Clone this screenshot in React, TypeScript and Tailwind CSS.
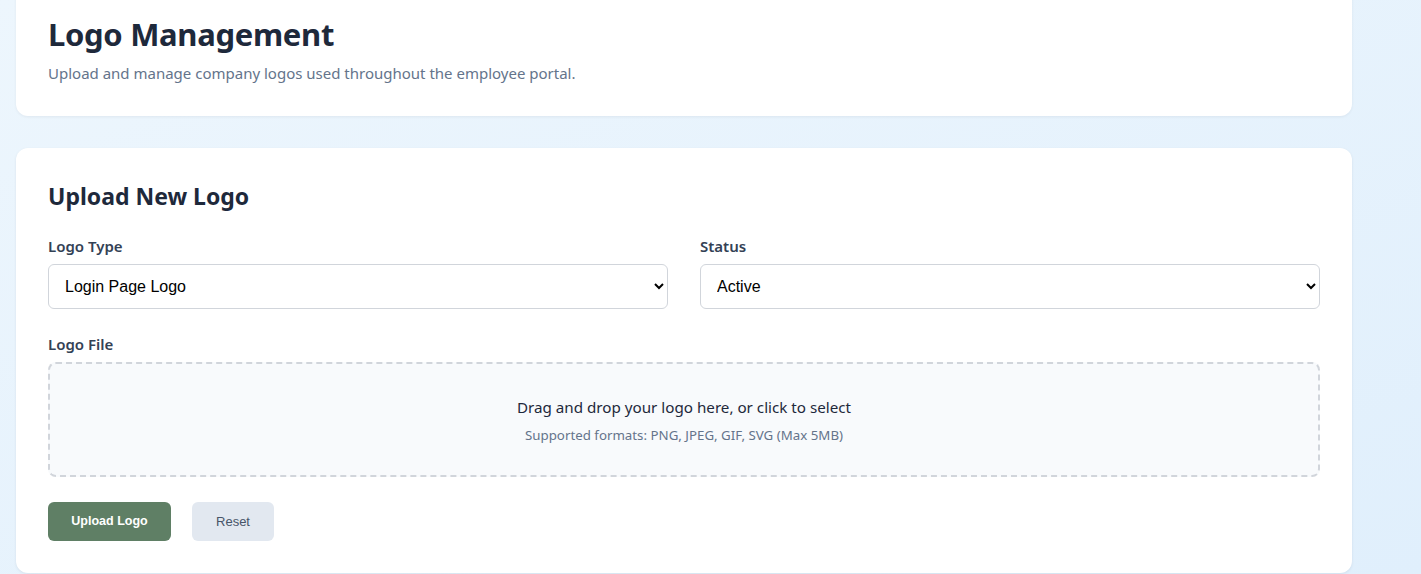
export default function App() {
  return (
    <div
      className="min-h-[574px] w-full overflow-hidden bg-gradient-to-br from-[#edf6fd] to-[#e0effc] pl-4"
      style={{ fontFamily: '"Noto Sans", sans-serif' }}
    >
      <div className="-mt-4 flex w-[1336px] flex-col gap-8">
        <div className="rounded-xl bg-white px-8 pb-8 pt-[31px] shadow-[0_1px_3px_rgba(15,23,42,0.06)]">
          <h1 className="text-[31px] font-bold leading-[38px] tracking-[-0.01em] text-[#1e293b]">Logo Management</h1>
          <p className="mt-[9px] text-[15px] leading-[22px] text-[#64748b]">
            Upload and manage company logos used throughout the employee portal.
          </p>
        </div>

        <div className="rounded-xl bg-white px-8 pb-8 pt-[33px] shadow-[0_1px_3px_rgba(15,23,42,0.08)]">
          <h2 className="text-[23px] font-bold leading-[30px] text-[#1e293b]">Upload New Logo</h2>

          <div className="mt-[25px] grid grid-cols-2 gap-8">
            <div className="flex flex-col">
              <label className="text-[15px] font-semibold leading-[20px] text-[#334155]">Logo Type</label>
              <select
                className="mt-2 h-[45px] w-full rounded-md border border-[#d1d5db] bg-white pl-3 pr-2 text-[16px] text-black"
                style={{ fontFamily: '"Liberation Sans", Arial, sans-serif' }}
                defaultValue="login"
              >
                <option value="login">Login Page Logo</option>
                <option value="header">Header Logo</option>
              </select>
            </div>
            <div className="flex flex-col">
              <label className="text-[15px] font-semibold leading-[20px] text-[#334155]">Status</label>
              <select
                className="mt-2 h-[45px] w-full rounded-md border border-[#d1d5db] bg-white pl-3 pr-2 text-[16px] text-black"
                style={{ fontFamily: '"Liberation Sans", Arial, sans-serif' }}
                defaultValue="active"
              >
                <option value="active">Active</option>
                <option value="inactive">Inactive</option>
              </select>
            </div>
          </div>

          <div className="mt-[25px] flex flex-col">
            <label className="text-[15px] font-semibold leading-[20px] text-[#334155]">Logo File</label>
            <div className="mt-2 flex h-[115px] flex-col items-center justify-center rounded-lg border-2 border-dashed border-[#d1d5db] bg-[#f8fafc]">
              <p className="text-[15.2px] leading-[22px] text-[#1e293b]">Drag and drop your logo here, or click to select</p>
              <p className="mt-[8px] text-[13.3px] leading-[18px] text-[#64748b]">Supported formats: PNG, JPEG, GIF, SVG (Max 5MB)</p>
            </div>
          </div>

          <div
            className="mt-[25px] flex gap-[21px]"
            style={{ fontFamily: '"Liberation Sans", Arial, sans-serif' }}
          >
            <button className="h-[39px] w-[123px] rounded-md bg-[#5f7f65] text-[12.5px] font-bold text-white">Upload Logo</button>
            <button className="h-[39px] w-[82px] rounded-md bg-[#e2e8f0] text-[13px] text-[#475569]">Reset</button>
          </div>
        </div>
      </div>
    </div>
  );
}
